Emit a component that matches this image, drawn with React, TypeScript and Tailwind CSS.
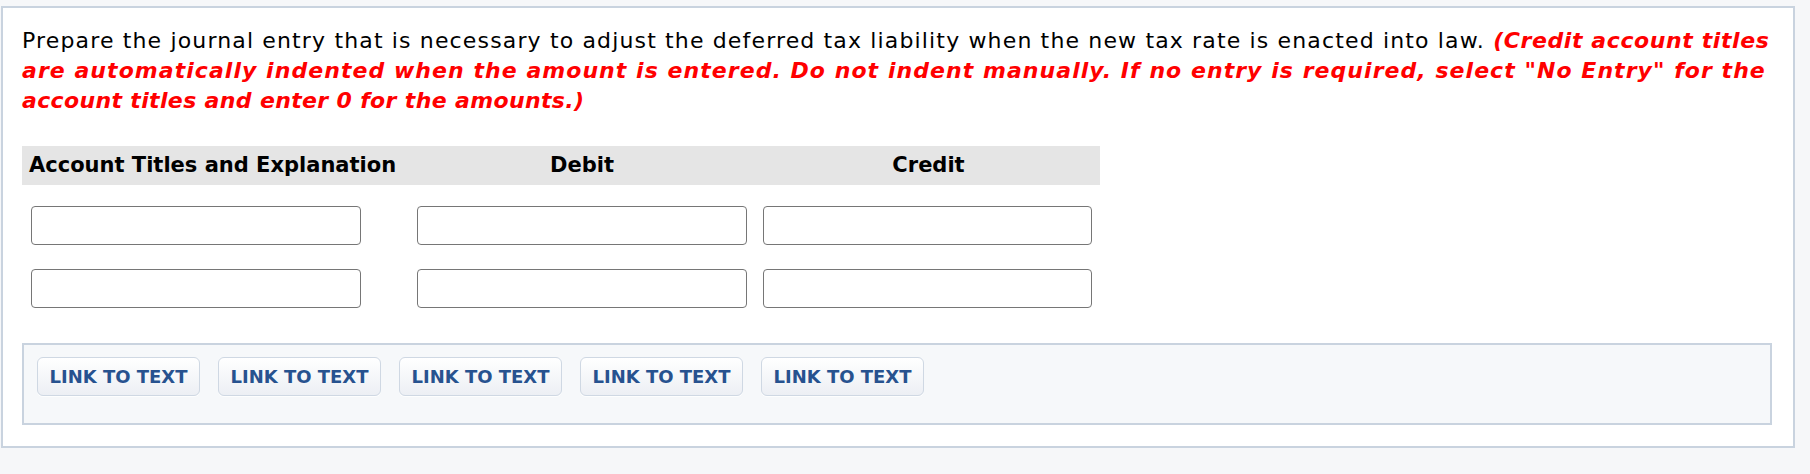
import React from 'react';

const LinkButton: React.FC = () => (
  <button
    type="button"
    className="h-[39px] w-[163px] rounded-[6px] border border-[#cfd8e3] bg-gradient-to-b from-white to-[#eceff4] text-[18px] font-bold text-[#27528f] shadow-[0_1px_0_rgba(255,255,255,0.8)]"
  >
    LINK TO TEXT
  </button>
);

const EntryRow: React.FC = () => (
  <div className="flex">
    <div className="w-[385px] pl-[9px]">
      <input className="h-[39px] w-[330px] rounded-[4px] border-[1.5px] border-[#767676] bg-white" />
    </div>
    <div className="w-[350px] pl-[10px]">
      <input className="h-[39px] w-[330px] rounded-[4px] border-[1.5px] border-[#767676] bg-white" />
    </div>
    <div className="w-[343px] pl-[6px]">
      <input className="h-[39px] w-[329px] rounded-[4px] border-[1.5px] border-[#767676] bg-white" />
    </div>
  </div>
);

export default function App() {
  return (
    <div
      className="min-h-screen bg-[#f6f7f9] pl-px pt-[6px]"
      style={{ fontFamily: '"DejaVu Sans", Verdana, sans-serif' }}
    >
      <div className="h-[442px] w-[1794px] border-2 border-[#c9d3df] bg-white pl-[19px] pr-[19px] pt-[18px]">
        <p className="text-[22px] leading-[30px] tracking-[1.15px] text-black">
          Prepare the journal entry that is necessary to adjust the deferred tax liability when the new tax rate is
          enacted into law.{' '}
          <em className="font-bold text-[#ff0000]">
            <span className="tracking-[0.6px]">(Credit account titles</span>
            <br />
            <span className="tracking-[1.05px]">
              are automatically indented when the amount is entered. Do not indent manually. If no entry is required,
              select "No Entry" for the
            </span>
            <br />
            <span className="tracking-[0.35px]">account titles and enter 0 for the amounts.)</span>
          </em>
        </p>

        <div className="mt-[30px] w-[1078px]">
          {/* header */}
          <div className="flex h-[39px] items-center bg-[#e5e5e5] text-[21px] font-bold text-black">
            <div className="w-[385px] pl-[7px]">Account Titles and Explanation</div>
            <div className="w-[350px] text-center">Debit</div>
            <div className="w-[343px] text-center">Credit</div>
          </div>

          <div className="mt-[21px] flex flex-col gap-[24px]">
            <EntryRow />
            <EntryRow />
          </div>
        </div>

        {/* links */}
        <div className="mt-[35px] h-[82px] w-[1750px] border-2 border-[#c9d3df] bg-[#f6f8fa] pl-[13px] pt-[12px]">
          <div className="flex gap-[18px]">
            <LinkButton />
            <LinkButton />
            <LinkButton />
            <LinkButton />
            <LinkButton />
          </div>
        </div>
      </div>
    </div>
  );
}
